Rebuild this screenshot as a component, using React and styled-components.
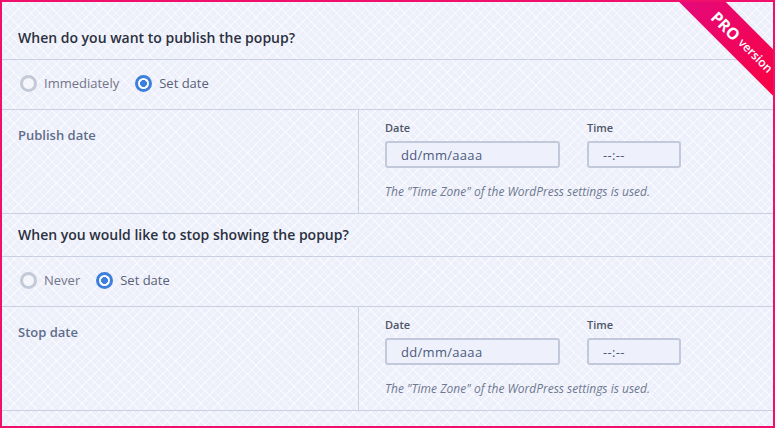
import React from "react";
import styled, { createGlobalStyle } from "styled-components";

const GlobalStyle = createGlobalStyle`
  html, body {
    margin: 0;
    padding: 0;
    background: #ffffff;
  }
  body {
    font-family: "Open Sans", "Noto Sans", sans-serif;
  }
`;

const Frame = styled.div`
  position: relative;
  box-sizing: border-box;
  width: 775px;
  height: 428px;
  overflow: hidden;
  border: 2px solid #f0106c;
  padding-top: 15px;
  background-color: #edf0fb;
  background-image:
    repeating-linear-gradient(45deg, rgba(255, 255, 255, 0.55) 0 1px, transparent 1px 6px),
    repeating-linear-gradient(-45deg, rgba(255, 255, 255, 0.55) 0 1px, transparent 1px 6px);
`;

const Heading = styled.h3`
  margin: 0;
  padding: 11px 16px 12px 16px;
  font-size: 14px;
  line-height: 19px;
  font-weight: 600;
  color: #2b3040;
  border-bottom: 1px solid #c9d0e2;
`;

const RadioRow = styled.div`
  display: flex;
  align-items: center;
  gap: 16px;
  box-sizing: border-box;
  height: 50px;
  padding: 0 18px 3px;
  border-bottom: 1px solid #c9d0e2;
`;

const RadioOption = styled.label`
  display: flex;
  align-items: center;
  gap: 7px;
  font-size: 13px;
  color: ${(p) => (p.checked ? "#5a6176" : "#747488")};
`;

const RadioDot = styled.span`
  box-sizing: border-box;
  width: 17px;
  height: 17px;
  border-radius: 50%;
  border: 3px solid ${(p) => (p.checked ? "#3d7fdc" : "#c4c9d7")};
  background: ${(p) =>
    p.checked
      ? "radial-gradient(circle, #3d7fdc 0 3.2px, #ffffff 3.7px)"
      : "#f4f6fc"};
`;

const DateRow = styled.div`
  display: grid;
  grid-template-columns: 357px 1fr;
  border-bottom: 1px solid #c9d0e2;
`;

const RowLabel = styled.div`
  padding: 16px 16px 0;
  font-size: 13px;
  line-height: 18px;
  font-weight: 600;
  color: #5f6d8b;
  border-right: 1px solid #c9d0e2;
`;

const Fields = styled.div`
  padding: 10px 26px 13px 26px;
`;

const FieldLine = styled.div`
  display: flex;
  gap: 27px;
`;

const Field = styled.div`
  display: flex;
  flex-direction: column;
  gap: 6px;
`;

const FieldLabel = styled.span`
  font-size: 11px;
  line-height: 15px;
  font-weight: 600;
  color: #4e5567;
`;

const Input = styled.div`
  box-sizing: border-box;
  width: ${(p) => p.width}px;
  height: 27px;
  border: 2px solid #c2c9db;
  border-radius: 3px;
  padding-left: 14px;
  display: flex;
  align-items: center;
  font-size: 13px;
  color: #4d5a7d;
  background: #eef1fb;
  letter-spacing: 0.3px;
`;

const Hint = styled.p`
  margin: 16px 0 0;
  font-size: 12px;
  line-height: 16px;
  font-style: italic;
  color: #6e7890;
`;

const Ribbon = styled.div`
  position: absolute;
  left: 642px;
  top: 25px;
  box-sizing: border-box;
  width: 200px;
  height: 33px;
  padding-right: 4px;
  transform: rotate(45deg);
  background: linear-gradient(to right, #e10a86, #ff0030);
  color: #ffffff;
  display: flex;
  align-items: center;
  justify-content: center;
  gap: 4px;
  font-weight: 700;
`;

const RibbonBig = styled.span`
  font-size: 16px;
`;

const RibbonSmall = styled.span`
  font-size: 12px;
  font-weight: 600;
`;

const Radio = ({ label, checked }) => (
  <RadioOption checked={checked}>
    <RadioDot checked={checked} />
    {label}
  </RadioOption>
);

const DateBlock = ({ label }) => (
  <DateRow>
    <RowLabel>{label}</RowLabel>
    <Fields>
      <FieldLine>
        <Field>
          <FieldLabel>Date</FieldLabel>
          <Input width={175}>dd/mm/aaaa</Input>
        </Field>
        <Field>
          <FieldLabel>Time</FieldLabel>
          <Input width={94}>--:--</Input>
        </Field>
      </FieldLine>
      <Hint>The "Time Zone" of the WordPress settings is used.</Hint>
    </Fields>
  </DateRow>
);

const App = () => {
  return (
    <>
      <GlobalStyle />
      <Frame>
        <Heading>When do you want to publish the popup?</Heading>
        <RadioRow>
          <Radio label="Immediately" />
          <Radio label="Set date" checked />
        </RadioRow>
        <DateBlock label="Publish date" />
        <Heading>When you would like to stop showing the popup?</Heading>
        <RadioRow>
          <Radio label="Never" />
          <Radio label="Set date" checked />
        </RadioRow>
        <DateBlock label="Stop date" />
        <Ribbon>
          <RibbonBig>PRO</RibbonBig>
          <RibbonSmall>version</RibbonSmall>
        </Ribbon>
      </Frame>
    </>
  );
};

export default App;
